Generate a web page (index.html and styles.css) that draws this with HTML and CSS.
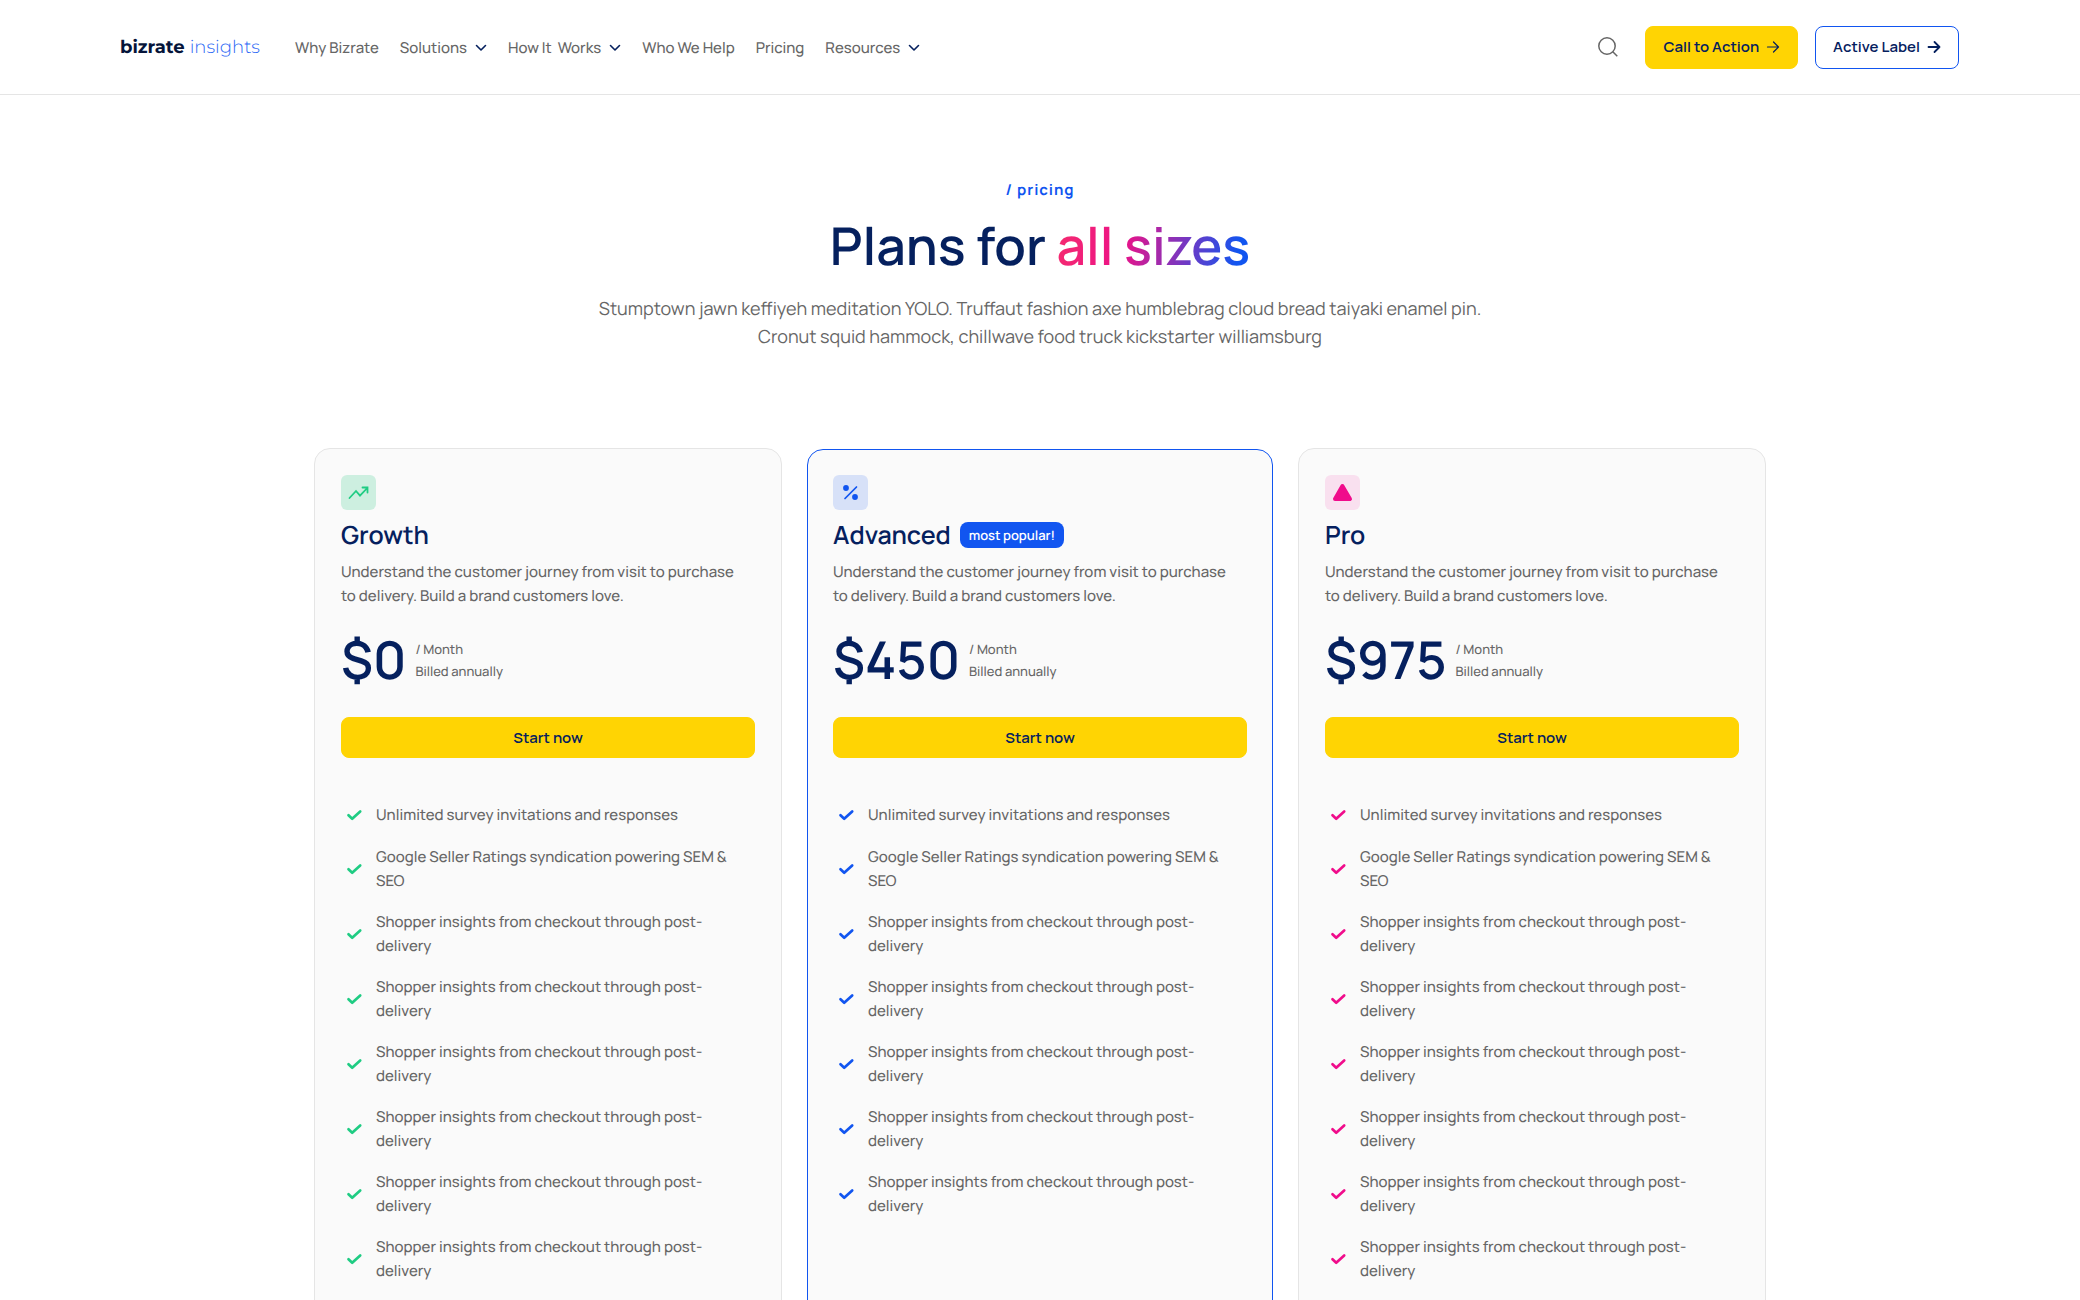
FILE: index.html
```html
<!DOCTYPE html>
<html lang="en">
<head>
<meta charset="utf-8">
<meta name="viewport" content="width=device-width, initial-scale=1">
<title>Pricing – Bizrate Insights</title>
<link rel="stylesheet" href="styles.css">
</head>
<body>
<svg class="sprite" aria-hidden="true">
  <symbol id="chevron" viewBox="0 0 12 8"><path d="M1.500 1.500 6 6l4.500-4.500" fill="none" stroke="currentColor" stroke-width="1.600" stroke-linecap="round" stroke-linejoin="round"/></symbol>
  <symbol id="arrow" viewBox="0 0 14 14"><path d="M1.500 7h11M7.500 2l5 5-5 5" fill="none" stroke="currentColor" stroke-linecap="round" stroke-linejoin="round"/></symbol>
  <symbol id="check" viewBox="0 0 26 26"><path d="M7.500 13.300l3.700 3.500 8-7.300" fill="none" stroke="currentColor" stroke-width="2.700" stroke-linecap="round" stroke-linejoin="round"/></symbol>
</svg>

<header class="header">
  <a class="logo" href="#"><span class="logo-main">bizrate</span><span class="logo-sub">insights</span></a>
  <nav class="nav" aria-label="Main">
    <a href="#">Why Bizrate</a>
    <a href="#">Solutions<svg class="chevron"><use href="#chevron"/></svg></a>
    <a href="#">How It&nbsp; Works<svg class="chevron"><use href="#chevron"/></svg></a>
    <a href="#">Who We Help</a>
    <a href="#">Pricing</a>
    <a href="#">Resources<svg class="chevron"><use href="#chevron"/></svg></a>
  </nav>
  <div class="actions">
    <button class="search" type="button" aria-label="Search">
      <svg viewBox="0 0 20 20" width="20" height="20" fill="none" stroke="currentColor" stroke-width="1.500"><circle cx="9" cy="9" r="8.200"/><path d="M14.800 14.800l4.500 4.500"/></svg>
    </button>
    <button class="btn btn-primary" type="button">Call to Action<svg class="arrow"><use href="#arrow"/></svg></button>
    <button class="btn btn-outline" type="button">Active Label<svg class="arrow arrow-bold"><use href="#arrow"/></svg></button>
  </div>
</header>

<main>
  <section class="hero">
    <p class="eyebrow">/ pricing</p>
    <h1>Plans for <span class="gradient">all sizes</span></h1>
    <p class="lead">Stumptown jawn keffiyeh meditation YOLO. Truffaut fashion axe humblebrag cloud bread taiyaki enamel pin.<br>Cronut squid hammock, chillwave food truck kickstarter williamsburg</p>
  </section>

  <section class="plans" aria-label="Plans">
    <article class="card growth">
      <div class="icon"><svg viewBox="0 0 35 35"><path d="M8.500 23l6.500-7 4 4.700 7.300-7.700M21.500 12.500h5v5" fill="none" stroke="currentColor" stroke-width="1.800" stroke-linecap="round" stroke-linejoin="miter"/></svg></div>
      <div class="title"><h2>Growth</h2></div>
      <p class="desc">Understand the customer journey from visit to purchase<br>to delivery. Build a brand customers love.</p>
      <div class="price"><span class="amount">$0</span><span class="terms">/ Month<br>Billed annually</span></div>
      <button class="btn btn-primary btn-wide" type="button">Start now</button>
      <ul class="features">
        <li><svg class="check"><use href="#check"/></svg><span>Unlimited survey invitations and responses</span></li>
        <li><svg class="check"><use href="#check"/></svg><span>Google Seller Ratings syndication powering SEM &amp;<br>SEO</span></li>
        <li><svg class="check"><use href="#check"/></svg><span>Shopper insights from checkout through post-<br>delivery</span></li>
        <li><svg class="check"><use href="#check"/></svg><span>Shopper insights from checkout through post-<br>delivery</span></li>
        <li><svg class="check"><use href="#check"/></svg><span>Shopper insights from checkout through post-<br>delivery</span></li>
        <li><svg class="check"><use href="#check"/></svg><span>Shopper insights from checkout through post-<br>delivery</span></li>
        <li><svg class="check"><use href="#check"/></svg><span>Shopper insights from checkout through post-<br>delivery</span></li>
        <li><svg class="check"><use href="#check"/></svg><span>Shopper insights from checkout through post-<br>delivery</span></li>
      </ul>
    </article>

    <article class="card advanced">
      <div class="icon"><svg viewBox="0 0 35 35"><path d="M12 23.500 23.500 12" fill="none" stroke="currentColor" stroke-width="1.700" stroke-linecap="round"/><circle cx="13" cy="13" r="2.900" fill="currentColor"/><circle cx="22" cy="22" r="2.900" fill="currentColor"/></svg></div>
      <div class="title"><h2>Advanced</h2><span class="badge">most popular!</span></div>
      <p class="desc">Understand the customer journey from visit to purchase<br>to delivery. Build a brand customers love.</p>
      <div class="price"><span class="amount">$450</span><span class="terms">/ Month<br>Billed annually</span></div>
      <button class="btn btn-primary btn-wide" type="button">Start now</button>
      <ul class="features">
        <li><svg class="check"><use href="#check"/></svg><span>Unlimited survey invitations and responses</span></li>
        <li><svg class="check"><use href="#check"/></svg><span>Google Seller Ratings syndication powering SEM &amp;<br>SEO</span></li>
        <li><svg class="check"><use href="#check"/></svg><span>Shopper insights from checkout through post-<br>delivery</span></li>
        <li><svg class="check"><use href="#check"/></svg><span>Shopper insights from checkout through post-<br>delivery</span></li>
        <li><svg class="check"><use href="#check"/></svg><span>Shopper insights from checkout through post-<br>delivery</span></li>
        <li><svg class="check"><use href="#check"/></svg><span>Shopper insights from checkout through post-<br>delivery</span></li>
        <li><svg class="check"><use href="#check"/></svg><span>Shopper insights from checkout through post-<br>delivery</span></li>
      </ul>
    </article>

    <article class="card pro">
      <div class="icon"><svg viewBox="0 0 35 35"><path d="M17.400 11 25 24H10Z" fill="currentColor" stroke="currentColor" stroke-width="4" stroke-linejoin="round"/></svg></div>
      <div class="title"><h2>Pro</h2></div>
      <p class="desc">Understand the customer journey from visit to purchase<br>to delivery. Build a brand customers love.</p>
      <div class="price"><span class="amount">$975</span><span class="terms">/ Month<br>Billed annually</span></div>
      <button class="btn btn-primary btn-wide" type="button">Start now</button>
      <ul class="features">
        <li><svg class="check"><use href="#check"/></svg><span>Unlimited survey invitations and responses</span></li>
        <li><svg class="check"><use href="#check"/></svg><span>Google Seller Ratings syndication powering SEM &amp;<br>SEO</span></li>
        <li><svg class="check"><use href="#check"/></svg><span>Shopper insights from checkout through post-<br>delivery</span></li>
        <li><svg class="check"><use href="#check"/></svg><span>Shopper insights from checkout through post-<br>delivery</span></li>
        <li><svg class="check"><use href="#check"/></svg><span>Shopper insights from checkout through post-<br>delivery</span></li>
        <li><svg class="check"><use href="#check"/></svg><span>Shopper insights from checkout through post-<br>delivery</span></li>
        <li><svg class="check"><use href="#check"/></svg><span>Shopper insights from checkout through post-<br>delivery</span></li>
        <li><svg class="check"><use href="#check"/></svg><span>Shopper insights from checkout through post-<br>delivery</span></li>
      </ul>
    </article>
  </section>
</main>
</body>
</html>
```
FILE: styles.css
```css
:root {
  --navy: #05205e;
  --blue: #1155f0;
  --green: #1fcc83;
  --pink: #f00c8b;
  --yellow: #ffd403;
  --gray: #666;
  --line: #e5e5e5;
}

* { box-sizing: border-box; margin: 0; padding: 0; }

body {
  background: #fff;
  color: var(--gray);
  font-family: Manrope, Inter, sans-serif;
  font-size: 15px;
  font-weight: 500;
  line-height: 24px;
  text-rendering: geometricPrecision;
}

button { font: inherit; cursor: pointer; }
a { color: inherit; text-decoration: none; }
.sprite { display: none; }

/* Header */
.header {
  display: flex;
  align-items: center;
  height: 95px;
  padding: 0 121px 0 120px;
  border-bottom: 1px solid var(--line);
}
.logo {
  display: flex;
  gap: 5px;
  margin-right: 35px;
  font-family: Montserrat, Inter, sans-serif;
  font-size: 18px;
}
.logo-main { color: #05143a; font-weight: 700; }
.logo-sub { color: #2b68f5; font-weight: 300; }
.nav { display: flex; gap: 21px; padding-top: 1px; }
.nav a { display: flex; align-items: center; white-space: nowrap; }
.chevron { width: 12px; height: 8px; margin-left: 8px; color: var(--navy); }
.actions { display: flex; align-items: center; margin-left: auto; }
.search {
  display: flex;
  margin-right: 27px;
  border: 0;
  background: none;
  color: var(--gray);
}

.btn {
  display: flex;
  align-items: center;
  justify-content: center;
  height: 43px;
  padding: 0 17px;
  border: 1px solid var(--yellow);
  border-radius: 8px;
  color: var(--navy);
  font-weight: 600;
  white-space: nowrap;
}
.btn-primary { background: var(--yellow); }
.btn-outline { margin-left: 17px; border-color: var(--blue); background: #fff; }
.btn-wide { width: 100%; height: 41px; }
.arrow { width: 14px; height: 14px; margin-left: 7px; stroke-width: 1.2; }
.arrow-bold { stroke-width: 1.8; }

/* Hero */
.hero { padding-top: 83px; text-align: center; }
.eyebrow { color: var(--blue); font-weight: 700; letter-spacing: 1px; }
h1 {
  margin-top: 12px;
  color: var(--navy);
  font-size: 52px;
  font-weight: 600;
  line-height: 64px;
}
.gradient {
  background: linear-gradient(100deg, #f52c6e, #ec1287 35%, #8a32b8 60%, #1155f0 92%);
  background-clip: text;
  -webkit-background-clip: text;
  color: transparent;
}
.lead { margin-top: 17px; font-size: 18px; font-weight: 400; line-height: 28px; }

/* Plans */
.plans {
  display: grid;
  grid-template-columns: repeat(3, 1fr);
  gap: 24px;
  max-width: 1452px;
  margin: 97px auto 96px;
}
.card {
  padding: 26px 26px 96px;
  border: 1px solid var(--line);
  border-radius: 16px;
  background: #fafafa;
}
.growth { --accent: var(--green); --tint: #cdefe0; }
.advanced { --accent: var(--blue); --tint: #d7e1f8; margin: 1px; padding: 25px; border-color: var(--blue); }
.pro { --accent: var(--pink); --tint: #f9e0ef; }
.icon {
  width: 35px;
  height: 35px;
  border-radius: 6px;
  background: var(--tint);
  color: var(--accent);
}
.icon svg { display: block; }
.title { display: flex; align-items: center; gap: 9px; height: 34px; margin-top: 8px; }
h2 { color: var(--navy); font-size: 25px; font-weight: 600; line-height: 34px; }
.badge {
  padding: 0 9px;
  border-radius: 8px;
  background: var(--blue);
  color: #fff;
  font-size: 13px;
  font-weight: 600;
  line-height: 26px;
}
.desc { margin-top: 8px; white-space: nowrap; }
.price { display: flex; align-items: center; gap: 9px; height: 64px; margin: 20px 0 25px; }
.amount { color: var(--navy); font-size: 52px; font-weight: 600; line-height: 64px; }
.terms { font-size: 13px; line-height: 22px; }
.features { display: grid; gap: 17px; margin-top: 44px; list-style: none; }
.features li { display: flex; align-items: center; gap: 9px; min-height: 26px; }
.check { flex: none; width: 26px; height: 26px; color: var(--accent); }
```
